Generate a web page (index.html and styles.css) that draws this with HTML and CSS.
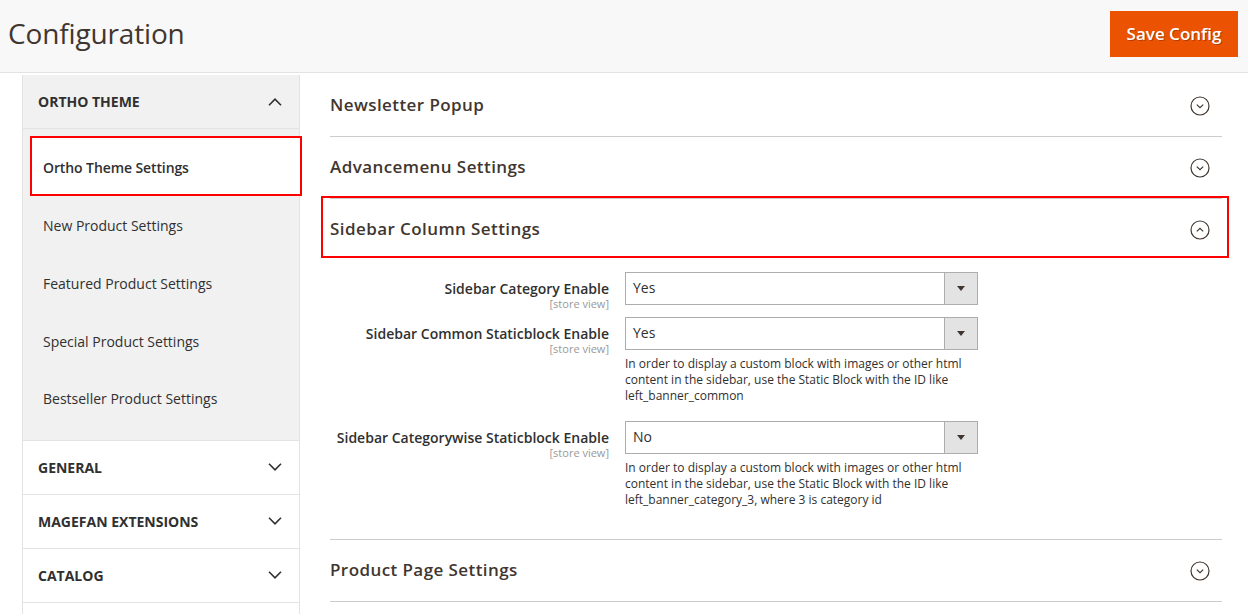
FILE: index.html
```html
<!DOCTYPE html>
<html>
<head>
<meta charset="utf-8">
<link rel="stylesheet" href="styles.css">
</head>
<body>
<header class="page-header">
  <h1 class="page-title">Configuration</h1>
  <button class="btn-primary">Save Config</button>
</header>
<div class="page-body">
  <nav class="sidenav">
    <div class="nav-block open">
      <div class="nav-title">
        <span>Ortho Theme</span>
        <svg class="chev" width="14" height="8" viewBox="0 0 14 8"><path d="M1 7.2 L7 1.2 L13 7.2" fill="none" stroke="#303030" stroke-width="1.6"/></svg>
      </div>
      <ul class="nav-items">
        <li class="nav-item active"><span>Ortho Theme Settings</span></li>
        <li class="nav-item"><span>New Product Settings</span></li>
        <li class="nav-item"><span>Featured Product Settings</span></li>
        <li class="nav-item"><span>Special Product Settings</span></li>
        <li class="nav-item"><span>Bestseller Product Settings</span></li>
      </ul>
    </div>
    <div class="nav-block">
      <div class="nav-title">
        <span>General</span>
        <svg class="chev" width="14" height="8" viewBox="0 0 14 8"><path d="M1 0.8 L7 6.8 L13 0.8" fill="none" stroke="#303030" stroke-width="1.6"/></svg>
      </div>
    </div>
    <div class="nav-block">
      <div class="nav-title">
        <span>Magefan Extensions</span>
        <svg class="chev" width="14" height="8" viewBox="0 0 14 8"><path d="M1 0.8 L7 6.8 L13 0.8" fill="none" stroke="#303030" stroke-width="1.6"/></svg>
      </div>
    </div>
    <div class="nav-block">
      <div class="nav-title">
        <span>Catalog</span>
        <svg class="chev" width="14" height="8" viewBox="0 0 14 8"><path d="M1 0.8 L7 6.8 L13 0.8" fill="none" stroke="#303030" stroke-width="1.6"/></svg>
      </div>
    </div>
    <div class="nav-block">
      <div class="nav-title"><span></span></div>
    </div>
  </nav>

  <main class="main">
    <section class="cfg-section">
      <div class="cfg-head">
        <span>Newsletter Popup</span>
        <svg class="circ" width="20" height="20" viewBox="0 0 20 20"><circle cx="10" cy="10" r="9" fill="none" stroke="#41362f" stroke-width="1.2"/><path d="M6.8 8.6 L10 11.6 L13.2 8.6" fill="none" stroke="#41362f" stroke-width="1.2"/></svg>
      </div>
    </section>
    <section class="cfg-section">
      <div class="cfg-head">
        <span>Advancemenu Settings</span>
        <svg class="circ" width="20" height="20" viewBox="0 0 20 20"><circle cx="10" cy="10" r="9" fill="none" stroke="#41362f" stroke-width="1.2"/><path d="M6.8 8.6 L10 11.6 L13.2 8.6" fill="none" stroke="#41362f" stroke-width="1.2"/></svg>
      </div>
    </section>
    <section class="cfg-section open">
      <div class="cfg-head highlighted">
        <span>Sidebar Column Settings</span>
        <svg class="circ" width="20" height="20" viewBox="0 0 20 20"><circle cx="10" cy="10" r="9" fill="none" stroke="#41362f" stroke-width="1.2"/><path d="M6.8 11.4 L10 8.4 L13.2 11.4" fill="none" stroke="#41362f" stroke-width="1.2"/></svg>
      </div>
      <div class="fieldset">
        <div class="field">
          <div class="label">
            <span class="label-text">Sidebar Category Enable</span>
            <span class="scope">[store view]</span>
          </div>
          <div class="control">
            <div class="select"><span class="val">Yes</span><span class="arrow"></span></div>
          </div>
        </div>
        <div class="field">
          <div class="label">
            <span class="label-text">Sidebar Common Staticblock Enable</span>
            <span class="scope">[store view]</span>
          </div>
          <div class="control">
            <div class="select"><span class="val">Yes</span><span class="arrow"></span></div>
            <p class="note">In order to display a custom block with images or other html content in the sidebar, use the Static Block with the ID like left_banner_common</p>
          </div>
        </div>
        <div class="field">
          <div class="label">
            <span class="label-text">Sidebar Categorywise Staticblock Enable</span>
            <span class="scope">[store view]</span>
          </div>
          <div class="control">
            <div class="select"><span class="val">No</span><span class="arrow"></span></div>
            <p class="note">In order to display a custom block with images or other html content in the sidebar, use the Static Block with the ID like left_banner_category_3, where 3 is category id</p>
          </div>
        </div>
      </div>
    </section>
    <section class="cfg-section">
      <div class="cfg-head">
        <span>Product Page Settings</span>
        <svg class="circ" width="20" height="20" viewBox="0 0 20 20"><circle cx="10" cy="10" r="9" fill="none" stroke="#41362f" stroke-width="1.2"/><path d="M6.8 8.6 L10 11.6 L13.2 8.6" fill="none" stroke="#41362f" stroke-width="1.2"/></svg>
      </div>
    </section>
  </main>
</div>
</body>
</html>
```

FILE: styles.css
```css
*, *::before, *::after { box-sizing: border-box; }
html, body { margin: 0; padding: 0; }
body {
  font-family: "Open Sans", "Liberation Sans", sans-serif;
  color: #303030;
  background: #fff;
  width: 1248px;
  height: 614px;
  overflow: hidden;
}

.page-header {
  height: 73px;
  background: #f8f8f8;
  border-bottom: 1px solid #e3e3e3;
  display: flex;
  align-items: flex-start;
  justify-content: space-between;
  padding: 0 10px 0 8px;
}
.page-title {
  margin: 14px 0 0;
  font-size: 28px;
  font-weight: 400;
  line-height: 38px;
  letter-spacing: -0.15px;
  color: #41362f;
}
.btn-primary {
  margin-top: 11px;
  width: 128px;
  height: 46px;
  border: 0;
  background: #eb5202;
  color: #fff;
  font-family: "Open Sans", "Liberation Sans", sans-serif;
  font-size: 17px;
  font-weight: 600;
  text-shadow: 1px 1px 0 rgba(0,0,0,0.25);
  padding: 0 0 2px;
}

.page-body {
  display: flex;
  align-items: flex-start;
}

.sidenav {
  margin: 2px 0 0 22px;
  width: 278px;
  border-left: 1px solid #e3e3e3;
  border-right: 1px solid #e3e3e3;
  flex: none;
}
.nav-block {
  border-bottom: 1px solid #e3e3e3;
  background: #fff;
}
.nav-block.open { background: #f1f1f1; }
.nav-title {
  height: 53px;
  display: flex;
  align-items: center;
  justify-content: space-between;
  padding: 0 17px 0 15px;
  font-size: 14px;
  font-weight: 700;
  text-transform: uppercase;
  color: #303030;
}
.nav-block.open .nav-title { border-bottom: 1px solid #e3e3e3; height: 54px; }
.nav-items {
  list-style: none;
  margin: 0;
  padding: 10px 0 12px;
}
.nav-item {
  position: relative;
  height: 57.75px;
  display: flex;
  align-items: center;
  padding-left: 20px;
  font-size: 14px;
  color: #303030;
}
.nav-item span { position: relative; z-index: 1; }
.nav-item.active span { font-weight: 600; letter-spacing: -0.1px; }
.nav-item.active::before {
  content: "";
  position: absolute;
  top: -3px;
  left: 7px;
  right: -3px;
  height: 60px;
  border: 2px solid #ff0000;
  background: #fff;
}

.main {
  margin: 2px 0 0 30px;
  width: 892px;
}
.cfg-section { border-bottom: 1px solid #cccccc; }
.cfg-head {
  position: relative;
  height: 61px;
  display: flex;
  align-items: center;
  justify-content: space-between;
  padding: 0 12px 2px 0;
  font-size: 17px;
  font-weight: 600;
  color: #41362f;
  letter-spacing: 0.42px;
}
.cfg-head .circ { position: relative; top: 1px; }
.cfg-head.highlighted::after {
  content: "";
  position: absolute;
  top: -3px;
  left: -9px;
  right: -7px;
  height: 62px;
  border: 2px solid #ff0000;
}

.fieldset { padding: 12px 0 14px; }
.field {
  display: flex;
  align-items: flex-start;
  margin-bottom: 7px;
}
.label {
  width: 295px;
  padding: 7px 16px 0 0;
  text-align: right;
  display: flex;
  flex-direction: column;
  align-items: flex-end;
}
.label-text {
  font-size: 14px;
  font-weight: 600;
  line-height: 19px;
  color: #303030;
}
.scope {
  font-size: 11px;
  line-height: 12px;
  color: #999;
}
.control { width: 353px; }
.select {
  height: 33px;
  border: 1px solid #adadad;
  background: #fff;
  display: flex;
  align-items: stretch;
}
.select .val {
  flex: 1;
  padding-left: 7px;
  font-size: 14px;
  line-height: 30px;
  color: #303030;
}
.select .arrow {
  width: 33px;
  background: #e3e3e3;
  border-left: 1px solid #adadad;
  position: relative;
}
.select .arrow::after {
  content: "";
  position: absolute;
  left: 12px;
  top: 13px;
  border-left: 4px solid transparent;
  border-right: 4px solid transparent;
  border-top: 5px solid #41362f;
}
.note {
  margin: 6px 0 10px;
  font-size: 12px;
  line-height: 16px;
  color: #303030;
}
```
